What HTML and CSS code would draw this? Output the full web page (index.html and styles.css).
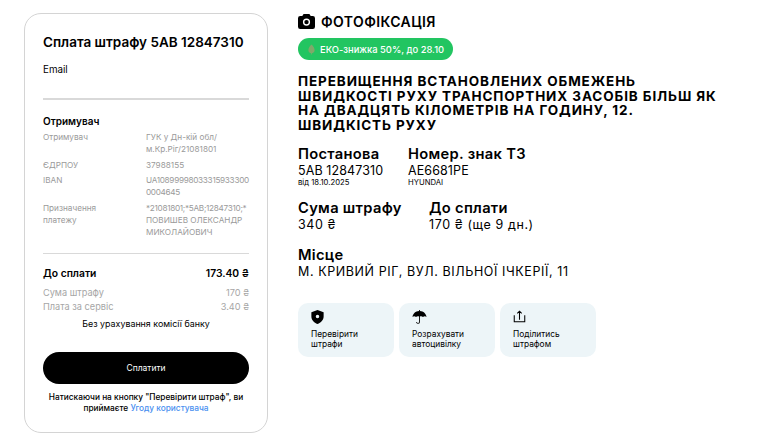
FILE: index.html
```html
<!DOCTYPE html>
<html lang="uk">
<head>
<meta charset="UTF-8">
<meta name="viewport" content="width=device-width, initial-scale=1.0">
<title>Сплата штрафу</title>
<link rel="stylesheet" href="styles.css">
</head>
<body>

<div class="pay-card">
  <h2>Сплата штрафу 5AB 12847310</h2>
  <div class="email">Email</div>
  <hr class="line line-email">

  <h3>Отримувач</h3>
  <div class="row"><span class="key">Отримувач</span><span class="val">ГУК у Дн-кій обл/<br>м.Кр.Ріг/21081801</span></div>
  <div class="row"><span class="key">ЄДРПОУ</span><span class="val">37988155</span></div>
  <div class="row"><span class="key">IBAN</span><span class="val tight">UA10899998033315933300<br>0004645</span></div>
  <div class="row"><span class="key">Призначення<br>платежу</span><span class="val"><span class="tight">*21081801;*5AB;12847310;*</span><br>ПОВИШЕВ ОЛЕКСАНДР<br>МИКОЛАЙОВИЧ</span></div>
  <hr class="line line-total">

  <div class="total"><span>До сплати</span><span>173.40 ₴</span></div>
  <div class="sum"><span>Сума штрафу</span><span>170 ₴</span></div>
  <div class="sum"><span>Плата за сервіс</span><span>3.40 ₴</span></div>
  <div class="no-fee">Без урахування комісії банку</div>
  <button class="pay-btn">Сплатити</button>
  <p class="terms">Натискаючи на кнопку "Перевірити штраф", ви<br>приймаєте <a href="#">Угоду користувача</a></p>
</div>

<div class="info">
  <div class="head">
    <svg width="17" height="15" viewBox="0 0 17 15"><path fill="#000" fill-rule="evenodd" d="M5.600 0h5.800l1.300 2h2.100A2.200 2.200 0 0 1 17 4.200v8.600a2.200 2.200 0 0 1-2.200 2.200H2.200A2.200 2.200 0 0 1 0 12.800V4.200A2.200 2.200 0 0 1 2.200 2h2.100zM8.500 4.500a3.600 3.600 0 1 0 0 7.200a3.600 3.600 0 0 0 0-7.200z"/><circle cx="8.500" cy="8.100" r="2.200" fill="#000"/></svg>
    <span>Фотофіксація</span>
  </div>
  <div class="eco">
    <svg width="7" height="11" viewBox="0 0 9 13"><path fill="#7fa86a" d="M4.500 0C7 2 8.500 5 8.500 7.500 8.500 10 6.800 11 5 11.200V13H4v-1.800C2.200 11 .5 10 .5 7.500.5 5 2 2 4.500 0z"/></svg>
    <span>ЕКО-знижка 50%, до 28.10</span>
  </div>
  <h1>Перевищення встановлених обмежень швидкості руху транспортних засобів більш як на двадцять кілометрів на годину, 12. Швидкість руху</h1>

  <div class="facts facts-first">
    <div class="fact fact-order">
      <div class="fact-name">Постанова</div>
      <div class="fact-val fact-id">5AB 12847310</div>
      <div class="fact-sub">від 18.10.2025</div>
    </div>
    <div class="fact">
      <div class="fact-name">Номер. знак ТЗ</div>
      <div class="fact-val fact-id">AE6681PE</div>
      <div class="fact-sub">HYUNDAI</div>
    </div>
  </div>

  <div class="facts facts-money">
    <div class="fact fact-fine">
      <div class="fact-name">Сума штрафу</div>
      <div class="fact-val">340 ₴</div>
    </div>
    <div class="fact">
      <div class="fact-name">До сплати</div>
      <div class="fact-val">170 ₴ (ще 9 дн.)</div>
    </div>
  </div>

  <div class="fact place">
    <div class="fact-name">Місце</div>
    <div class="fact-val">М. КРИВИЙ РІГ, ВУЛ. ВІЛЬНОЇ ІЧКЕРІЇ, 11</div>
  </div>

  <div class="actions">
    <div class="action">
      <svg width="13" height="14" viewBox="0 0 14 16"><path fill="#000" fill-rule="evenodd" d="M7 0l7 2.500v5C14 11.500 11 14.600 7 16 3 14.600 0 11.500 0 7.500v-5zM7 5.500a2 2 0 1 0 0 4a2 2 0 0 0 0-4z"/></svg>
      <span>Перевірити штрафи</span>
    </div>
    <div class="action">
      <svg width="15" height="14" viewBox="0 0 16 16"><path fill="#000" d="M7.500 0h1v1.100C12.500 1.400 15.600 4 16 8c-1-1-3-1-4 0-1-1-2.500-1-3.500-.6v6a2.200 2.200 0 0 1-4.400.4h1a1.200 1.200 0 0 0 2.400-.4v-6C6.500 7 5 7 4 8 3 7 1 7 0 8c.4-4 3.500-6.600 7.500-6.900z"/></svg>
      <span>Розрахувати автоцивілку</span>
    </div>
    <div class="action">
      <svg width="13" height="14" viewBox="0 0 14 16"><path fill="none" stroke="#000" stroke-width="1.200" d="M1 6v7.500h12V6M7 11V1.500M4.500 3.800L7 1.300l2.500 2.500"/></svg>
      <span>Поділитись штрафом</span>
    </div>
  </div>
</div>

</body>
</html>
```

FILE: styles.css
```css
body {
  margin: 0;
  padding: 13px 0 0 24px;
  display: flex;
  align-items: flex-start;
  gap: 30px;
  font-family: Inter, "Noto Sans", sans-serif;
  color: #000;
  background-color: #fff;
}

/* payment card */
.pay-card {
  box-sizing: border-box;
  width: 244px;
  height: 420px;
  padding: 20px 18px 0 18px;
  border: 1px solid #d4d4d4;
  border-radius: 17px;
}
h2 {
  margin: 0;
  font-size: 13.500px;
  line-height: 16px;
  font-weight: 600;
}
.email {
  margin-top: 14px;
  font-size: 9.800px;
  line-height: 12px;
}
.line {
  margin: 0;
  border: none;
  border-top: 1px solid #d9d9d9;
}
.line-email {
  margin-top: 22px;
  border-top-width: 2px;
}
h3 {
  margin: 15px 0 2px;
  font-size: 10px;
  line-height: 13px;
  font-weight: 600;
}
.row {
  display: flex;
  margin-top: 3.400px;
  font-size: 8.200px;
  line-height: 12px;
  color: #9a9a9a;
}
.key {
  flex: 0 0 103px;
}
.val {
  flex: 1;
  white-space: nowrap;
}
.tight {
  letter-spacing: -0.3px;
}
.line-total {
  margin-top: 15px;
}
.total,
.sum {
  display: flex;
  justify-content: space-between;
}
.total {
  margin-top: 13px;
  font-size: 10.300px;
  line-height: 13px;
  font-weight: 600;
}
.sum {
  margin-top: 1px;
  font-size: 9.200px;
  line-height: 13px;
  color: #a6a6a6;
}
.total + .sum {
  margin-top: 6px;
}
.no-fee {
  margin-top: 5px;
  text-align: center;
  font-size: 8.900px;
  line-height: 12px;
}
.pay-btn {
  display: block;
  width: 100%;
  height: 32px;
  margin-top: 22px;
  border: none;
  border-radius: 16px;
  background-color: #000;
  color: #fff;
  font-family: inherit;
  font-size: 8.500px;
}
.terms {
  margin: 8px 0 0;
  text-align: center;
  font-size: 8.300px;
  line-height: 11px;
  font-weight: 500;
}
.terms a {
  color: #4a90f0;
  text-decoration: none;
}

/* right column */
.info {
  width: 430px;
  padding-top: 1px;
}
.head {
  display: flex;
  align-items: center;
  gap: 6px;
  height: 15px;
  font-size: 14px;
  font-weight: 600;
  text-transform: uppercase;
  letter-spacing: 0.4px;
}
.eco {
  display: flex;
  align-items: center;
  gap: 5px;
  box-sizing: border-box;
  width: 155px;
  height: 22px;
  margin-top: 9px;
  padding-left: 10px;
  border-radius: 11px;
  background-color: #22c561;
  color: #fff;
  font-size: 9.400px;
  font-weight: 500;
}
h1 {
  margin: 14px 0 0;
  font-size: 13.500px;
  line-height: 14.500px;
  font-weight: 700;
  text-transform: uppercase;
  letter-spacing: 0.9px;
}
.facts {
  display: flex;
}
.facts-first {
  margin-top: 13px;
}
.facts-money {
  margin-top: 12px;
}
.fact-order {
  width: 110px;
}
.fact-fine {
  width: 131px;
}
.fact-name {
  font-size: 14.700px;
  line-height: 18px;
  font-weight: 600;
  letter-spacing: 0.3px;
}
.fact-val {
  font-size: 12.500px;
  line-height: 15px;
  letter-spacing: 0.6px;
}
.fact-id {
  letter-spacing: 0.1px;
}
.fact-sub {
  font-size: 7.700px;
  line-height: 9px;
}
.place {
  margin-top: 14px;
}
.actions {
  display: flex;
  gap: 5px;
  margin-top: 24px;
}
.action {
  box-sizing: border-box;
  width: 96px;
  height: 54px;
  padding: 7px 13px 0;
  border-radius: 10px;
  background-color: #edf5f8;
  font-size: 8.400px;
  line-height: 10px;
}
.action svg {
  display: block;
  margin-bottom: 5px;
}
```
